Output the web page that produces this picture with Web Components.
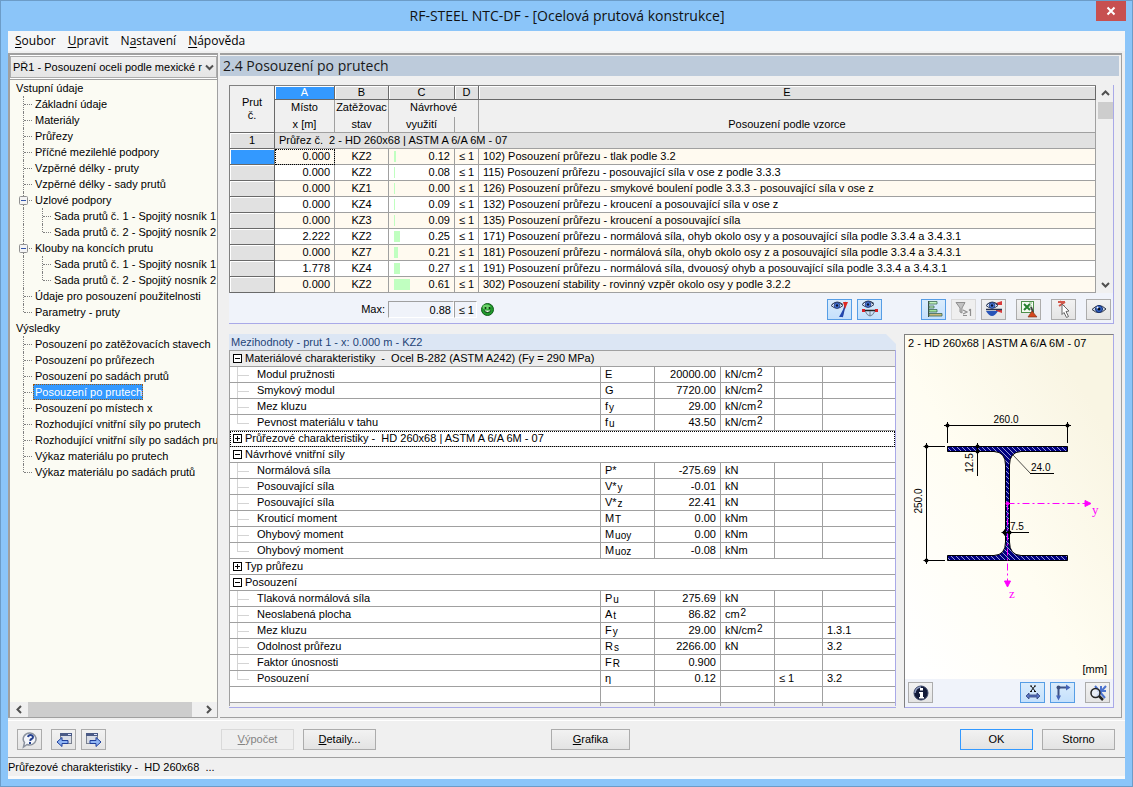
<!DOCTYPE html>
<html lang="cs">
<head>
<meta charset="utf-8">
<title>RF-STEEL NTC-DF</title>
<style>
  html, body { margin: 0; }
  body {
    font: 11px/15px "Liberation Sans", Arial, sans-serif;
    color: #000;
    --line: #a0a0a0;
    --face: #f0f0f0;
    --lav: #a9a9e8;
    --blue: #3399ff;
    --bar: #f0f3fa;
    --ui: "Open Sans", "Noto Sans", sans-serif;
  }
</style>
</head>
<body>
<app-window caption="RF-STEEL NTC-DF - [Ocelová prutová konstrukce]">
  <menu-bar slot="menu"></menu-bar>
  <nav-panel slot="nav"></nav-panel>
  <page-frame slot="page" heading="2.4 Posouzení po prutech">
    <results-panel></results-panel>
    <detail-panel></detail-panel>
    <section-panel></section-panel>
  </page-frame>
  <action-bar slot="actions"></action-bar>
  <status-line slot="status">Průřezové charakteristiky -&nbsp; HD 260x68&nbsp; ...</status-line>
</app-window>

<script>
const define = (name, html, setup) => customElements.define(name, class extends HTMLElement {
  connectedCallback() {
    if (this.shadowRoot) return;
    const root = this.attachShadow({ mode: 'open' });
    root.innerHTML = '<style>*{box-sizing:border-box}</style>' + (typeof html === 'function' ? html(this) : html);
    if (setup) setup(root, this);
  }
});

const eye = (x, y) => `<g transform="translate(${x} ${y})"><path d="M0 3.5Q5.500-2.500 12 3.500Q6 9 0 3.500Z" fill="#dfe9f8" stroke="#33415c"/><path d="M1 2.500Q6-2.500 12 2.500" fill="none" stroke="#33415c"/><circle cx="6" cy="3.500" r="2.800" fill="#4a7ad8" stroke="#1c3a8c" stroke-width=".8"/><circle cx="6" cy="3.500" r="1.200" fill="#0a1430"/></g>`;

const ICONS = {
  eyeSection: eye(0, 2) + '<path d="M15 2l-4 15" stroke="#243c94" stroke-width="1.500"/><path d="M12 2h5L14 9z" fill="#e02a22"/><path d="M13 8l-1 9H8z" fill="#2348b0"/>',
  eyeForce: eye(1, 1) + '<path d="M2 10.500h15" stroke="#222" stroke-width="1.500"/><path d="M4 11q5 10 10 0M9 11v5" fill="none" stroke="#6f7a8a"/><rect x="1" y="9" width="3" height="3" fill="#d81f26"/><rect x="14" y="9" width="3" height="3" fill="#d81f26"/>',
  bars: '<path d="M3.500 1v16" stroke="#3a4a44"/><g stroke="#3b6a54" stroke-width=".8"><path d="M4 1.500h8v2.500H4zM4 6h5v2H4z" fill="#c3f3bd"/><path d="M4 9.500h8v2.500H4z" fill="#9fe39a"/><path d="M4 13.500h13v2.500H4z" fill="#c9b878"/></g>',
  filter: '<path d="M1 2.500h9L7 8v5l-2-1V8z" fill="#c2c2c2" stroke="#8f8f8f"/><path d="M8 10l4 2-4 2M8 15.500h4M15.500 9V16M14 10.500l1.500-1.500" fill="none" stroke="#8f8f8f" stroke-width="1.200"/>',
  eyeScale: '<path d="M11 3l6-2v4h-6zM11 9h6v4l-6-2z" fill="#d93a3a"/><path d="M1 11h12q-6 10-12 0z" fill="#2754b8"/><path d="M1 9.500h16" stroke="#27314f" stroke-width="1.500"/>' + eye(1, 2),
  excel: '<rect x="1.500" y="1.500" width="12" height="11" fill="#f5fbf2" stroke="#4e8f4a"/><path d="M4 4l6 6M10 4l-6 6" stroke="#25812e" stroke-width="2"/><path d="M9 3h3M9 6h3" stroke="#7cb376"/><path d="M11 7l2 5" stroke="#444" stroke-width="2"/><path d="M8 17l4-6 5 6z" fill="#d4461c" stroke="#7a2a14" stroke-width=".6"/>',
  pick: '<path d="M3 2h7M4 6l6-4M5 1l4 5" stroke="#d3574a" stroke-width="2"/><path d="M7 4l7 7-3 .5 2.500 5-2 1-2.500-5-2 2z" fill="#fff" stroke="#666"/>',
  eye: '<path d="M2 9.500Q9 2 16 9Q9 16 2 9.500Z" fill="#c8d5ea" stroke="#2f3542"/><circle cx="9" cy="9" r="3.500" fill="#3468cf" stroke="#142a66"/><circle cx="9" cy="9" r="1.500" fill="#060b1a"/><circle cx="7.500" cy="7.500" r="1" fill="#fff"/>',
  info: '<circle cx="9" cy="9" r="7" fill="#121a38" stroke="#3b4668"/><path d="M3 9a6 6 0 0 1 6-6" fill="none" stroke="#8f9cc0" stroke-width="1.500"/><rect x="8" y="4" width="3" height="2.500" fill="#fff"/><path d="M7 8h4v5h1v1.500H7V13h1V9.500H7z" fill="#fff"/>',
  dimX: '<path d="M7 2l4 5M11 2l-4 5M6 2h2M10 2h2M6 7.500h2M10 7.500h2" stroke="#111" stroke-width="1"/><path d="M2 12l3-3v2h8v-2l3 3-3 3v-2H5v2z" fill="#5673c4" stroke="#30427c" stroke-width=".8"/>',
  axes: '<path d="M4.500 14V3.500H14" fill="none" stroke="#3e5284" stroke-width="2"/><path d="M12 .5l4.500 3-4.500 3zM2 11.500h5l-2.500 5z" fill="#4465b8"/><circle cx="4.500" cy="3.500" r="2" fill="#3d4f7c"/>',
  zoomOff: '<path d="M6 2l10 12M17 2L8 12M12 2v8M8 7h9" stroke="#4a72cf" stroke-width="2"/><circle cx="6.500" cy="9" r="4.500" fill="#e9eef8" fill-opacity=".8" stroke="#222" stroke-width="1.500"/><path d="M10 12l4 4" stroke="#222" stroke-width="2.500"/>',
  help: '<path d="M9 2a6.500 6 0 1 1-3 11.500L2.500 16 3.500 11.500A6.500 6 0 0 1 9 2z" fill="#f4f6fb" stroke="#8b929e" stroke-width="1.500"/><path d="M7 6q.5-2 2.500-2T12 6q0 1.500-1.500 2T9.500 10" fill="none" stroke="#26418f" stroke-width="2"/><rect x="8" y="11" width="2" height="2" fill="#26418f"/>',
  back: '<rect x="5.500" y="2.500" width="11" height="10" fill="#d9dde6" stroke="#7a8190"/><path d="M5 2h12v3H5z" fill="#4a5a86"/><path d="M13 3h3v1h-3z" fill="#dfe6ff"/><path d="M2 11l5-4.500v3h6v3H7v3z" fill="#8fb5f4" stroke="#1f3f9c"/>',
  next: '<rect x="1.500" y="2.500" width="11" height="10" fill="#d9dde6" stroke="#7a8190"/><path d="M1 2h12v3H1z" fill="#4a5a86"/><path d="M9 3h3v1H9z" fill="#dfe6ff"/><path d="M16 11l-5-4.500v3H5v3h6v3z" fill="#8fb5f4" stroke="#1f3f9c"/>'
};

define('app-window', el => `
<style>
  :host { display: flex; flex-direction: column; min-height: 100vh; box-sizing: border-box;
    background: #8bc5f9; border: 1px solid #6c9cc8; padding: 0 7px 7px; }
  header { display: grid; grid-template-columns: 1fr auto 1fr; height: 30px; margin: 0 -1px 0 0; }
  h1 { grid-column: 2; margin: 0; font: 14px/30px var(--ui); color: #111; white-space: nowrap; }
  .close { justify-self: end; width: 30px; height: 20px; border: 0; padding: 0; background: #c75050; }
  .close svg { display: block; margin: 0 auto; }
  .client { flex: 1; display: flex; flex-direction: column; background: var(--face); }
  main { flex: 1; display: flex; gap: 2px; margin: 2px 3px 2px 0; }
  ::slotted([slot=nav]) { flex: 0 0 210px; min-width: 0; }
  ::slotted([slot=page]) { flex: 1; min-width: 0; }
</style>
<header><h1>${el.getAttribute('caption')}</h1>
  <button class="close" aria-label="Zavřít"><svg width="10" height="10" viewBox="0 0 10 10"><path d="M1.500 1.500l7 7M8.500 1.500l-7 7" stroke="#fff" stroke-width="2"/></svg></button></header>
<div class="client">
  <slot name="menu"></slot>
  <main><slot name="nav"></slot><slot name="page"></slot></main>
  <slot name="actions"></slot>
  <slot name="status"></slot>
</div>`);

define('menu-bar', `
<style>
  :host { display: flex; background: #f5f6f7; padding-left: 1px; }
  button { border: 0; background: none; padding: 0 6px; font: 12px/20px var(--ui); color: #000; }
  u { text-underline-offset: 2px; }
</style>
<button><u>S</u>oubor</button><button><u>U</u>pravit</button><button>N<u>a</u>stavení</button><button><u>N</u>ápověda</button>`);

define('scroll-arrows', el => {
  const v = el.hasAttribute('vertical');
  const arrow = d => `<svg width="9" height="9" viewBox="0 0 9 9"><path d="${d}" fill="none" stroke="#505050" stroke-width="2"/></svg>`;
  return `
<style>
  :host { display: flex; flex-direction: ${v ? 'column' : 'row'}; background: #f0f0f0; }
  button { flex: none; display: flex; align-items: center; justify-content: center; border: 0; padding: 0; background: none; width: ${v ? 15 : 18}px; height: ${v ? 17 : 15}px; }
  .track { flex: 1; display: flex; flex-direction: inherit; }
  .thumb { background: #cdcdcd; flex: 0 0 var(--thumb); }
</style>
<button aria-label="Zpět">${arrow(v ? 'M1 6l3.500-3.500L8 6' : 'M6 1L2.500 4.500 6 8')}</button>
<div class="track"><div class="thumb"></div></div>
<button aria-label="Vpřed">${arrow(v ? 'M1 3l3.500 3.500L8 3' : 'M3 1l3.500 3.500L3 8')}</button>`;
});

define('tree-item', el => {
  const level = +el.getAttribute('level');
  const last = el.hasAttribute('last') ? ' last' : '';
  const box = el.hasAttribute('open') ? '<svg class="box" width="9" height="9"><rect x=".5" y=".5" width="8" height="8" rx="1" fill="#f4f4f4" stroke="#919191"/><path d="M2 4.500h5" stroke="#3355aa"/></svg>' : '';
  const guides = level === 0 ? '' : level === 1
    ? `<i class="g${last}">${box}</i>`
    : `<i class="g through"></i><i class="g${last}"></i>`;
  return `
<style>
  :host { display: flex; height: 16px; padding-left: 4px; white-space: nowrap; }
  .g { flex: none; position: relative; width: 19px; }
  .g::before { content: ""; position: absolute; left: 9px; top: 0; bottom: 0; border-left: 1px dotted #808080; }
  .g.last::before { bottom: 8px; }
  .g::after { content: ""; position: absolute; left: 10px; top: 8px; width: 8px; border-top: 1px dotted #808080; }
  .g.through::after { display: none; }
  .box { position: absolute; left: 5px; top: 4px; z-index: 1; }
  a { color: #000; text-decoration: none; padding: 0 1px 0 2px; line-height: 16px; }
  :host([current]) a { background: var(--blue); color: #fff; outline: 1px dotted #a05a10; outline-offset: -1px; }
</style>${guides}<a href="#"><slot></slot></a>`;
});

const NAV = [
  [0, 'Vstupní údaje'], [1, 'Základní údaje'], [1, 'Materiály'], [1, 'Průřezy'], [1, 'Příčné mezilehlé podpory'],
  [1, 'Vzpěrné délky - pruty'], [1, 'Vzpěrné délky - sady prutů'], [1, 'Uzlové podpory', 'open'],
  [2, 'Sada prutů č. 1 - Spojitý nosník 1'], [2, 'Sada prutů č. 2 - Spojitý nosník 2', 'last'],
  [1, 'Klouby na koncích prutu', 'open'],
  [2, 'Sada prutů č. 1 - Spojitý nosník 1'], [2, 'Sada prutů č. 2 - Spojitý nosník 2', 'last'],
  [1, 'Údaje pro posouzení použitelnosti'], [1, 'Parametry - pruty', 'last'],
  [0, 'Výsledky'], [1, 'Posouzení po zatěžovacích stavech'], [1, 'Posouzení po průřezech'], [1, 'Posouzení po sadách prutů'],
  [1, 'Posouzení po prutech', 'current'], [1, 'Posouzení po místech x'], [1, 'Rozhodující vnitřní síly po prutech'],
  [1, 'Rozhodující vnitřní síly po sadách prutů'], [1, 'Výkaz materiálu po prutech'], [1, 'Výkaz materiálu po sadách prutů', 'last']
];
define('nav-panel', () => `
<style>
  :host { display: flex; flex-direction: column; box-sizing: border-box; border: 1px solid var(--line); border-left-width: 2px; border-top-width: 2px; background: #fff; }
  .pick { display: grid; margin-top: 1px; }
  select, .pick svg { grid-area: 1 / 1; }
  select { appearance: none; width: 100%; height: 22px; border: 1px solid #acacac; border-radius: 0; padding: 0 13px 0 2px;
    background: linear-gradient(#f0f0f0, #e5e5e5); font: inherit; color: #000; }
  .pick svg { align-self: center; justify-self: end; margin-right: 3px; pointer-events: none; }
  nav { flex: 1; margin-top: 1px; border-top: 1px solid var(--line); background: #fbfbf3; overflow: hidden; }
  scroll-arrows { --thumb: 164px; }
</style>
<div class="pick"><select aria-label="Případ posouzení"><option>PŘ1 - Posouzení oceli podle mexické r</option></select>
<svg width="9" height="9" viewBox="0 0 9 9"><path d="M1 2.500l3.500 3.500L8 2.500" fill="none" stroke="#505050" stroke-width="2"/></svg></div>
<nav>${NAV.map(([l, t, f = '']) => `<tree-item level="${l}" ${f}>${t}</tree-item>`).join('')}</nav>
<scroll-arrows></scroll-arrows>`);

define('page-frame', el => `
<style>
  :host { display: flex; flex-direction: column; box-sizing: border-box; border: solid var(--line); border-width: 2px 1px 1px 0; }
  h2 { margin: 1px 2px 0 0; padding-left: 3px; background: #bdcbdb; font: 14px/20px var(--ui); color: #1a1a1a; }
  .body { flex: 1; display: grid; grid-template: auto 1fr / minmax(0, 1fr) 210px; gap: 10px 8px; padding: 9px 7px 9px 9px; }
  ::slotted(results-panel) { grid-column: 1 / 3; }
</style>
<h2>${el.getAttribute('heading')}</h2>
<div class="body"><slot></slot></div>`);

define('icon-button', el => `
<style>
  :host { display: block; flex: none; }
  button { display: flex; align-items: center; justify-content: center; width: 25px; height: 21px; padding: 0;
    border: 1px solid #acacac; background: linear-gradient(#f2f2f2, #e4e4e4); }
  :host([on]) button { border-color: #569de5; background: linear-gradient(#daecfc, #c4e0fc); }
  :host([off]) button { border-color: #d9d9d9; background: #efefef; }
</style>
<button aria-label="${el.getAttribute('label')}"${el.hasAttribute('off') ? ' disabled' : ''}><svg width="18" height="18" viewBox="0 0 18 18">${ICONS[el.getAttribute('icon')]}</svg></button>`);

const RESULTS = [
  ['0.000', 'KZ2', '0.12', 2, '102) Posouzení průřezu - tlak podle 3.2'],
  ['0.000', 'KZ2', '0.08', 1, '115) Posouzení průřezu - posouvající síla v ose z podle 3.3.3'],
  ['0.000', 'KZ1', '0.00', 1, '126) Posouzení průřezu - smykové boulení podle 3.3.3 - posouvající síla v ose z'],
  ['0.000', 'KZ4', '0.09', 1, '132) Posouzení průřezu - kroucení a posouvající síla v ose z'],
  ['0.000', 'KZ3', '0.09', 1, '135) Posouzení průřezu - kroucení a posouvající síla'],
  ['2.222', 'KZ2', '0.25', 6, '171) Posouzení průřezu - normálová síla, ohyb okolo osy y a posouvající síla podle 3.3.4 a 3.4.3.1'],
  ['0.000', 'KZ7', '0.21', 4, '181) Posouzení průřezu - normálová síla, ohyb okolo osy z a posouvající síla podle 3.3.4 a 3.4.3.1'],
  ['1.778', 'KZ4', '0.27', 6, '191) Posouzení průřezu - normálová síla, dvouosý ohyb a posouvající síla podle 3.3.4 a 3.4.3.1'],
  ['0.000', 'KZ2', '0.61', 16, '302) Posouzení stability - rovinný vzpěr okolo osy y podle 3.2.2']
];
define('results-panel', () => `
<style>
  :host { display: block; border: solid var(--lav); border-width: 0 1px 1px 0; background: var(--bar); }
  .grid { display: flex; background: var(--face); }
  table { flex: 1; min-width: 0; table-layout: fixed; border-collapse: separate; border-spacing: 0; border: solid #808080; border-width: 1px 0 0 1px; }
  td, th { height: 16px; padding: 0; border: solid var(--line); border-width: 0 1px 1px 0; font-weight: normal; line-height: 15px; white-space: nowrap; overflow: hidden; }
  .letters th { height: 14px; line-height: 13px; background: #e1e1e1; border-color: #696969; box-shadow: inset 1px 1px #fff; }
  .letters .sel { background: var(--blue); color: #fff; }
  .letters .corner { background: var(--face); line-height: 13px; box-shadow: none; }
  .cap th { background: var(--face); text-align: center; }
  .cap th { line-height: 14px; padding-bottom: 1px; }
  .top th { height: 17px; border-bottom: 0; padding-bottom: 3px; }
  .row { background: #e1e1e1; border-color: #696969; box-shadow: inset 1px 1px #fff; }
  .group td { background: #e1e1e1; padding-left: 4px; }
  tbody tr:nth-child(even) td { background: #fffaf0; }
  tbody tr:nth-child(odd) td { background: #fff; }
  tbody tr.group td { background: #e1e1e1; }
  .num { text-align: right; padding-right: 4px; }
  .mid { text-align: center; }
  .txt { padding-left: 4px; }
  .use { display: flex; align-items: center; justify-content: space-between; padding-left: 5px; height: 15px; }
  .use i { display: block; height: 11px; background: #c0ffc0; }
  .now { background: var(--blue); }
  .focus { outline: 1px dotted #000; outline-offset: -1px; }
  scroll-arrows { --thumb: 17px; margin: 0 0 0 2px; }
  .foot { display: flex; align-items: center; height: 30px; padding: 2px 2px 0 0; }
  .foot label { width: 156px; text-align: right; }
  output { height: 17px; line-height: 16px; border: 1px solid var(--line); border-right-color: #fff; border-bottom-color: #fff; padding-right: 2px; text-align: right; }
  .max { width: 66px; margin-left: 3px; }
  .lim { width: 23px; margin-right: 4px; }
  .tools { flex: 1; display: flex; justify-content: flex-end; gap: 5px; }
  .a { margin-left: 34px; } .b { margin-left: 5px; }
</style>
<div class="grid">
<table>
  <colgroup><col style="width:45px"><col style="width:60px"><col style="width:54px"><col style="width:66px"><col style="width:24px"><col></colgroup>
  <thead>
    <tr class="letters"><th class="corner" rowspan="3">Prut<br>č.</th><th class="sel">A</th><th>B</th><th>C</th><th>D</th><th>E</th></tr>
    <tr class="cap top"><th>Místo</th><th>Zatěžovac</th><th colspan="2">Návrhové</th><th></th></tr>
    <tr class="cap"><th>x [m]</th><th>stav</th><th>využití</th><th></th><th>Posouzení podle vzorce</th></tr>
  </thead>
  <tbody>
    <tr class="group"><th class="row">1</th><td colspan="5">Průřez č.&nbsp; 2 - HD 260x68 | ASTM A 6/A 6M - 07</td></tr>
    ${RESULTS.map(([x, k, v, w, t], i) => `<tr><th class="row${i ? '' : ' now'}"></th><td class="num${i ? '' : ' focus'}">${x}</td><td class="mid">${k}</td><td class="num"><div class="use"><i style="width:${w}px"></i>${v}</div></td><td class="mid">≤ 1</td><td class="txt">${t}</td></tr>`).join('')}
  </tbody>
</table>
<scroll-arrows vertical></scroll-arrows>
</div>
<div class="foot">
  <label for="max">Max:</label><output id="max" class="max">0.88</output><output class="lim">≤ 1</output>
  <svg width="13" height="13" viewBox="0 0 13 13"><circle cx="6.500" cy="6.500" r="6" fill="#219a2c" stroke="#115c1a"/><ellipse cx="5.500" cy="4" rx="4" ry="2.500" fill="#7fe07a" opacity=".8"/><circle cx="4.500" cy="5" r="1" fill="#06300a"/><circle cx="8.500" cy="5" r="1" fill="#06300a"/><path d="M3 7.500q3.500 4 7 0" fill="#eafbe6" stroke="#06300a"/></svg>
  <div class="tools">
    <icon-button on icon="eyeSection" label="Průřez"></icon-button>
    <icon-button on icon="eyeForce" label="Vnitřní síly"></icon-button>
    <icon-button class="a" on icon="bars" label="Grafické pruhy"></icon-button>
    <icon-button off icon="filter" label="Filtr"></icon-button>
    <icon-button icon="eyeScale" label="Barevná škála"></icon-button>
    <icon-button class="b" icon="excel" label="Export"></icon-button>
    <icon-button class="b" icon="pick" label="Vybrat prut"></icon-button>
    <icon-button class="b" icon="eye" label="Zobrazit"></icon-button>
  </div>
</div>`);

const CM = 'kN/cm<sup>2</sup>';
const DETAIL = [
  ['-', 'Materiálové charakteristiky&nbsp; -&nbsp; Ocel B-282 (ASTM A242) (Fy = 290 MPa)', 'shade'],
  ['Modul pružnosti', 'E', '20000.00', CM], ['Smykový modul', 'G', '7720.00', CM],
  ['Mez kluzu', 'f<sub>y</sub>', '29.00', CM], ['Pevnost materiálu v tahu', 'f<sub>u</sub>', '43.50', CM],
  ['+', 'Průřezové charakteristiky -&nbsp; HD 260x68 | ASTM A 6/A 6M - 07', 'focus'],
  ['-', 'Návrhové vnitřní síly', ''],
  ['Normálová síla', 'P*', '-275.69', 'kN'], ['Posouvající síla', 'V*<sub>y</sub>', '-0.01', 'kN'], ['Posouvající síla', 'V*<sub>z</sub>', '22.41', 'kN'],
  ['Krouticí moment', 'M<sub>T</sub>', '0.00', 'kNm'], ['Ohybový moment', 'M<sub>uoy</sub>', '0.00', 'kNm'], ['Ohybový moment', 'M<sub>uoz</sub>', '-0.08', 'kNm'],
  ['+', 'Typ průřezu', ''], ['-', 'Posouzení', ''],
  ['Tlaková normálová síla', 'P<sub>u</sub>', '275.69', 'kN'], ['Neoslabená plocha', 'A<sub>t</sub>', '86.82', 'cm<sup>2</sup>'],
  ['Mez kluzu', 'F<sub>y</sub>', '29.00', CM, '', '1.3.1'], ['Odolnost průřezu', 'R<sub>s</sub>', '2266.00', 'kN', '', '3.2'],
  ['Faktor únosnosti', 'F<sub>R</sub>', '0.900', ''], ['Posouzení', 'η', '0.12', '', '≤ 1', '3.2']
];
define('detail-panel', () => {
  const isGroup = r => r && (r[0] === '-' || r[0] === '+');
  const sign = s => `<svg width="9" height="9"><rect x=".5" y=".5" width="8" height="8" fill="#fff" stroke="#000"/><path d="M2 4.500h5${s === '+' ? 'M4.500 2v5' : ''}" stroke="#000"/></svg>`;
  const rows = DETAIL.map((r, i) => isGroup(r)
    ? `<tr class="${r[2]}"><td class="grp" colspan="6"><span>${sign(r[0])}${r[1]}</span></td></tr>`
    : `<tr><td class="name${i === DETAIL.length - 1 || isGroup(DETAIL[i + 1]) ? ' last' : ''}">${r[0]}</td><td>${r[1]}</td><td class="num">${r[2]}</td><td>${r[3]}</td><td>${r[4] || ''}</td><td>${r[5] || ''}</td></tr>`).join('');
  return `
<style>
  :host { display: block; border-bottom: 1px solid var(--lav); }
  h3 { margin: 0; height: 16px; padding-left: 2px; font: inherit; line-height: 16px; color: #1f4478; background: #dce6f4; clip-path: polygon(0 0, calc(100% - 10px) 0, 100% 10px, 100% 100%, 0 100%); }
  .wrap { border-right: 1px solid var(--lav); }
  table { width: 100%; table-layout: fixed; border-collapse: separate; border-spacing: 0; border: solid var(--line); border-width: 1px 0 0 1px; background: #fff; }
  td { height: 16px; padding: 0 0 0 4px; line-height: 15px; white-space: nowrap; border: solid var(--line); border-width: 0 1px 1px 0; }
  td:last-child { border-right: 0; }
  .num { text-align: right; padding: 0 4px 0 0; }
  .grp { padding-left: 3px; }
  .grp span { display: flex; align-items: center; gap: 3px; height: 15px; }
  .shade td { background: #ececec; }
  .focus td { outline: 1px dotted #000; outline-offset: -1px; }
  .name { position: relative; padding-left: 27px; }
  .name::before { content: ""; position: absolute; left: 7px; top: 0; bottom: 0; border-left: 1px solid #d4d4d4; }
  .name.last::before { bottom: 7px; }
  .name::after { content: ""; position: absolute; left: 7px; top: 8px; width: 12px; border-top: 1px solid #d4d4d4; }
  sub, sup { font-size: 10px; line-height: 0; margin-left: 1px; }
  sub { vertical-align: -1px; } sup { vertical-align: 2px; }
  .rest td { height: 3px; border-bottom: 0; background: var(--face); }
</style>
<h3>Mezihodnoty - prut 1 - x: 0.000 m - KZ2</h3>
<div class="wrap"><table>
<colgroup><col><col style="width:54px"><col style="width:66px"><col style="width:54px"><col style="width:48px"><col style="width:72px"></colgroup>
<tbody>${rows}<tr><td></td><td></td><td></td><td></td><td></td><td></td></tr>
<tr class="rest"><td></td><td></td><td></td><td></td><td></td><td></td></tr></tbody></table></div>`;
});

define('section-panel', () => {
  const dot = (x, y) => `<circle cx="${x}" cy="${y}" r="2"/><path d="M${x - 3} ${y}h6M${x} ${y - 3}v6" stroke="#000"/>`;
  return `
<style>
  :host { display: flex; flex-direction: column; border: solid; border-width: 1px; border-color: #808080 var(--lav) var(--lav) #808080; }
  .canvas { flex: 1; display: flex; flex-direction: column; background: linear-gradient(60deg, #fff 5%, #fffdf2 45%, #f9f5e3 85%); }
  p { margin: 0; line-height: 15px; padding: 1px 3px; }
  .canvas svg { flex: 1; width: 100%; font-size: 10px; }
  .unit { text-align: right; padding: 0 6px 2px; }
  .tools { display: flex; gap: 5px; height: 28px; padding: 3px; background: var(--bar); }
  .push { margin-left: auto; } .b { margin-left: 5px; }
</style>
<div class="canvas">
<p>2 - HD 260x68 | ASTM A 6/A 6M - 07</p>
<svg viewBox="905 352 208 310" role="img" aria-label="Průřez HD 260x68">
  <defs><pattern id="h" width="5" height="5" patternUnits="userSpaceOnUse"><rect width="5" height="5" fill="#000080"/><path d="M-1-1l7 7M4-1l2 2M-1 4l2 2" stroke="#a9aee0" stroke-width=".9"/></pattern></defs>
  <path d="M947.500 446.500H1067.500V451.500H1021Q1009.500 452 1009.500 465V542Q1009.500 555 1021 555.500H1067.500V560.500H947.500V555.500H994Q1005.500 555 1005.500 542V465Q1005.500 452 994 451.500H947.500Z" fill="url(#h)" stroke="#000"/>
  <g stroke="#000" fill="none">
    <path d="M944 425.500H1071M947.500 422V443M1067.500 422V443"/>
    <path d="M926.500 443V564M926.500 446.500H945M926.500 560.500H945"/>
    <path d="M977.500 443V476M1002 532.500H1029M1030 473.500H1054"/><path d="M1013 455L1030.500 473.500" stroke-width=".7"/>
  </g>
  ${dot(947.5, 425.5)}${dot(1067.5, 425.5)}${dot(926.5, 446.5)}${dot(926.5, 560.5)}${dot(977.5, 446.5)}${dot(977.5, 451.5)}${dot(1004.5, 532.5)}${dot(1009.5, 532.5)}
  <text x="1006" y="423" text-anchor="middle">260.0</text>
  <text transform="translate(922 501) rotate(-90)" text-anchor="middle">250.0</text>
  <text transform="translate(973 463) rotate(-90)" text-anchor="middle">12.5</text>
  <text x="1031" y="471">24.0</text><text x="1010" y="530">7.5</text>
  <g stroke="#f0f" fill="#f0f"><path d="M1007.500 503.500H1085M1007.500 503.500V582" stroke-dasharray="7 3 2 3"/>
  <path d="M1085 500.500l6 3-6 3zM1004.500 581h6l-3 6z"/><circle cx="1007.500" cy="503.500" r="1.500"/></g>
  <g fill="#f0f" font-family="Liberation Serif, serif" font-size="13"><text x="1092" y="514">y</text><text x="1009" y="598">z</text></g>
</svg>
<p class="unit">[mm]</p>
</div>
<div class="tools"><icon-button icon="info" label="Informace"></icon-button>
  <icon-button class="push" on icon="dimX" label="Kóty"></icon-button><icon-button on icon="axes" label="Osy"></icon-button>
  <icon-button class="b" icon="zoomOff" label="Zobrazit vše"></icon-button></div>`;
});

define('push-button', el => `
<style>
  :host { display: block; flex: 0 0 73px; }
  button { width: 100%; height: 21px; padding: 0; font: inherit; color: #000; border: 1px solid #acacac; background: linear-gradient(#f2f2f2, #e3e3e3); }
  :host([primary]) button { border-color: var(--blue); }
  button:disabled { color: #838383; border-color: #d9d9d9; background: #efefef; }
</style>
<button${el.hasAttribute('off') ? ' disabled' : ''}><slot></slot></button>`);

define('action-bar', `
<style>
  :host { display: flex; align-items: center; gap: 9px; padding: 8px 10px 7px 9px; border-top: 1px solid #fff; }
  .pair { display: flex; gap: 5px; flex: 0 0 161px; }
  .wide { flex-basis: 79px; margin-left: 166px; }
  .right { margin-left: auto; }
</style>
<icon-button icon="help" label="Nápověda"></icon-button>
<div class="pair"><icon-button icon="back" label="Předchozí"></icon-button><icon-button icon="next" label="Další"></icon-button></div>
<push-button off><u>V</u>ýpočet</push-button><push-button><u>D</u>etaily...</push-button>
<push-button class="wide"><u>G</u>rafika</push-button>
<push-button class="right" primary>OK</push-button><push-button>Storno</push-button>`);

define('status-line', `
<style>
  :host { display: block; border-top: 1px solid var(--line); border-bottom: 3px solid #fafafa; line-height: 18px; }
</style><slot></slot>`);
</script>
</body>
</html>
